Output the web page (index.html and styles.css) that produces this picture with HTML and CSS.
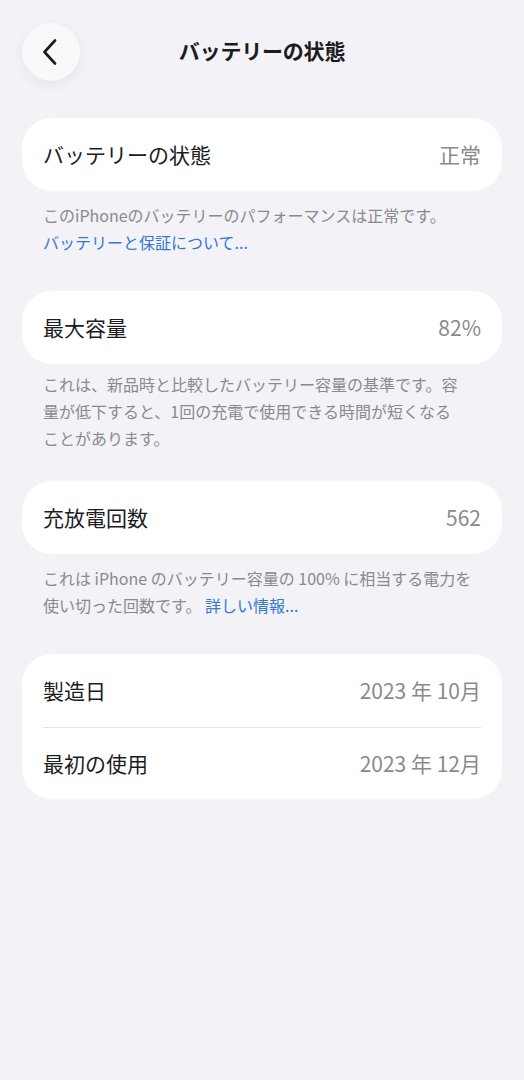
FILE: index.html
```html
<!DOCTYPE html>
<html lang="ja">

<head>
    <meta charset="UTF-8">
    <meta name="viewport" content="width=device-width, initial-scale=1.0">
    <title>バッテリーの状態</title>
    <link rel="stylesheet" href="styles.css">
</head>

<body>

    <header class="nav-bar">
        <button class="back-button" aria-label="戻る">
            <svg width="16" height="26" viewBox="0 0 16 26">
                <path d="M13 1.5 L2.5 13 L13 24.5" fill="none" stroke="#1c1c1e" stroke-width="2.6"
                    stroke-linecap="round" stroke-linejoin="round" />
            </svg>
        </button>
        <h1 class="nav-title">バッテリーの状態</h1>
        <div class="nav-spacer"></div>
    </header>

    <main class="settings">

        <section class="group">
            <div class="card">
                <div class="row">
                    <span class="row-label">バッテリーの状態</span>
                    <span class="row-value">正常</span>
                </div>
            </div>
            <p class="footnote">
                このiPhoneのバッテリーのパフォーマンスは正常です。<br>
                <a href="#" class="link">バッテリーと保証について...</a>
            </p>
        </section>

        <section class="group group-tight">
            <div class="card">
                <div class="row">
                    <span class="row-label">最大容量</span>
                    <span class="row-value">82%</span>
                </div>
            </div>
            <p class="footnote">
                これは、新品時と比較したバッテリー容量の基準です。容<br>
                量が低下すると、1回の充電で使用できる時間が短くなる<br>
                ことがあります。
            </p>
        </section>

        <section class="group">
            <div class="card">
                <div class="row">
                    <span class="row-label">充放電回数</span>
                    <span class="row-value">562</span>
                </div>
            </div>
            <p class="footnote">
                これは iPhone のバッテリー容量の 100% に相当する電力を<br>
                使い切った回数です。 <a href="#" class="link">詳しい情報...</a>
            </p>
        </section>

        <section class="group">
            <div class="card">
                <div class="row">
                    <span class="row-label">製造日</span>
                    <span class="row-value">2023 年 10月</span>
                </div>
                <div class="row">
                    <span class="row-label">最初の使用</span>
                    <span class="row-value">2023 年 12月</span>
                </div>
            </div>
        </section>

    </main>

</body>

</html>
```

FILE: styles.css
```css
body {
    margin: 0;
    background-color: #f2f2f7;
    font-family: 'Noto Sans CJK JP', 'Noto Sans', sans-serif;
    color: #1c1c1e;
}

.nav-bar {
    display: flex;
    align-items: center;
    justify-content: space-between;
    padding: 23px 22px 0;
}

.back-button {
    width: 58px;
    height: 58px;
    border: none;
    border-radius: 50%;
    background-color: #f9f9fb;
    box-shadow: 0 4px 14px rgba(0, 0, 0, 0.06);
    display: flex;
    align-items: center;
    justify-content: center;
    padding: 0 3px 0 0;
}

.nav-title {
    margin: 0 0 4px;
    font-size: 21px;
    font-weight: 700;
    letter-spacing: -0.2px;
}

.nav-spacer {
    width: 58px;
}

.settings {
    padding: 37px 22px 0;
}

.group {
    margin-bottom: 35px;
}

/* three-line footnote sits a little closer */
.group-tight {
    margin-bottom: 29px;
}

.group-tight .footnote {
    padding-top: 7px;
}

.card {
    background-color: #fff;
    border-radius: 30px;
    overflow: hidden;
}

.row {
    display: flex;
    justify-content: space-between;
    align-items: center;
    height: 71px;
    padding-bottom: 2px;
    margin: 0 21px;
    font-size: 21px;
}

.row + .row {
    border-top: 1px solid #e3e3e8;
    height: 69px;
    padding-bottom: 2px;
}

.row-value {
    color: #8a8a8e;
}

.footnote {
    margin: 0;
    padding: 11px 21px 0;
    font-size: 16px;
    line-height: 27px;
    color: #8a8a8e;
    white-space: nowrap;
}

.link {
    color: #3478d4;
    text-decoration: none;
}
```
